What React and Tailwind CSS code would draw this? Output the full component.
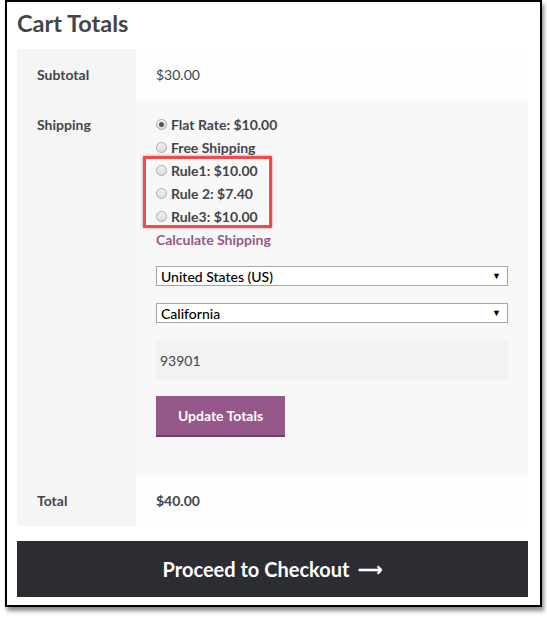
import React from "react";

function Radio({ checked }) {
  return (
    <span className="inline-flex w-[11px] h-[11px] rounded-full border border-[#a9a9a9] bg-gradient-to-b from-[#f1f1f1] to-[#dcdcdc] items-center justify-center mr-[4px] shrink-0">
      {checked && <span className="w-[5px] h-[5px] rounded-full bg-[#555]" />}
    </span>
  );
}

function Option({ label, checked }) {
  return (
    <div className="flex items-center h-[23px] font-bold">
      <Radio checked={checked} />
      <span>{label}</span>
    </div>
  );
}

function FakeSelect({ value }) {
  return (
    <div className="flex items-center justify-between h-[20px] border border-[#a6a6a6] bg-white pl-[4px] pr-[6px] text-black text-[14px] font-medium">
      <span>{value}</span>
      <span className="text-[9px]">▼</span>
    </div>
  );
}

export default function App() {
  return (
    <div
      className="w-[547px] h-[617px] bg-white text-[#43454b] text-[14px]"
      style={{ fontFamily: "Lato, 'Open Sans', sans-serif" }}
    >
      <div className="ml-[5px] w-[537px] h-[607px] border-2 border-black bg-white shadow-[2px_4px_4px_rgba(0,0,0,0.45)] pl-[10px] pr-[12px]">
        <h2 className="text-[23.5px] font-bold leading-[30px] pt-[6px] mb-[11px]">Cart Totals</h2>

        <div className="flex">
          <div className="w-[119px] bg-[#f5f5f5] pl-[20px] py-[14px] leading-[23px] font-bold">Subtotal</div>
          <div className="flex-1 bg-[#fdfdfd] pl-[20px] py-[14px] leading-[23px]">$30.00</div>
        </div>

        <div className="flex">
          <div className="w-[119px] bg-[#f5f5f5] pl-[20px] py-[13px] leading-[23px] font-bold">Shipping</div>
          <div className="flex-1 bg-[#f8f8f8] pl-[20px] pr-[20px] pt-[13px] pb-[38px]">
            <Option label="Flat Rate: $10.00" checked />
            <Option label="Free Shipping" />
            <div className="relative">
              <Option label="Rule1: $10.00" />
              <Option label="Rule 2: $7.40" />
              <Option label="Rule3: $10.00" />
              <div className="absolute -left-[13px] -top-[3px] w-[129px] h-[72px] border-[3px] border-[#f04a4a] shadow-[0_0_3px_rgba(0,0,0,0.35)]" />
            </div>
            <div className="h-[23px] leading-[23px] font-bold text-[#96588a]">Calculate Shipping</div>
            <div className="mt-[15px]">
              <FakeSelect value="United States (US)" />
            </div>
            <div className="mt-[17px]">
              <FakeSelect value="California" />
            </div>
            <div className="mt-[18px] h-[39px] bg-[#f2f2f2] flex items-center pl-[4px] text-[#43454b]">93901</div>
            <div className="mt-[16px] w-[129px] h-[41px] bg-[#96588a] border-b-2 border-[#6f3f66] text-white font-bold flex items-center justify-center">
              Update Totals
            </div>
          </div>
        </div>

        <div className="flex">
          <div className="w-[119px] bg-[#f5f5f5] pl-[20px] py-[14px] leading-[23px] font-bold">Total</div>
          <div className="flex-1 bg-[#fdfdfd] pl-[20px] py-[14px] leading-[23px] font-bold">$40.00</div>
        </div>

        <div className="mt-[15px] h-[56px] bg-[#2c2d33] text-white font-bold text-[20px] flex items-center justify-center">
          <span>Proceed to Checkout</span>
          <span className="ml-[9px] text-[17px] leading-none">⟶</span>
        </div>
      </div>
    </div>
  );
}
